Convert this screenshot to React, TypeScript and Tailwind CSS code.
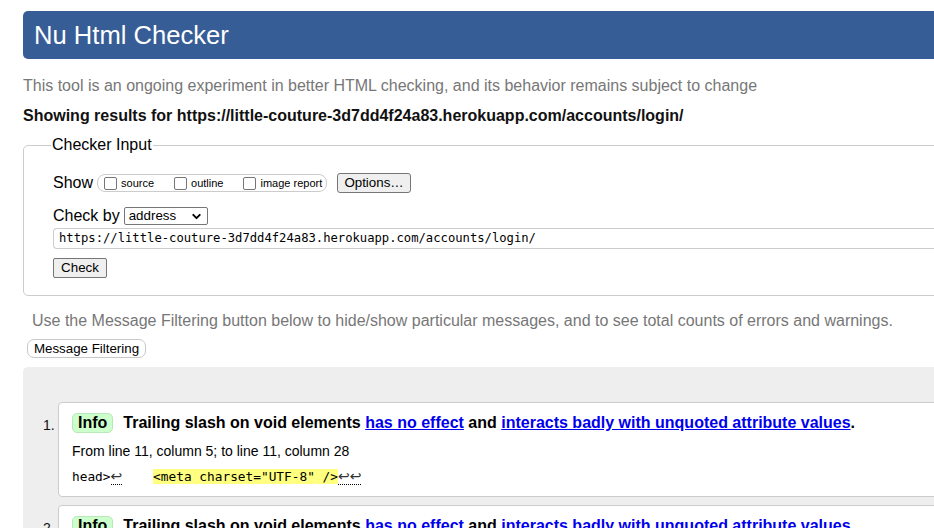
import { ChevronDown } from 'lucide-react'

const url = 'https://little-couture-3d7dd4f24a83.herokuapp.com/accounts/login/'

function Box({ label }: { label: string }) {
  return (
    <label className="flex items-center gap-[4px]">
      <span className="h-[13px] w-[13px] rounded-[2px] border border-[#767676] bg-white" />
      <span className="text-[11px] leading-[14px]">{label}</span>
    </label>
  )
}

function Ret({ n = 1 }: { n?: number }) {
  return (
    <span className="border-b border-dotted border-black font-['DejaVu_Sans',sans-serif] text-[14px] leading-[14px] text-[#333]">
      {'↩'.repeat(n)}
    </span>
  )
}

function Message({ n }: { n: number }) {
  return (
    <div className="flex">
      <span className="mt-[13px] w-[15px] text-[14px] leading-[20px] text-[#111]">{n}.</span>
      <div className="flex-1 rounded-[4px] border border-[#ccc] bg-white pb-[11px] pl-[13px] pt-[10px]">
        <div className="flex h-[20px] items-center gap-[10px] text-[16px] font-bold">
          <span className="rounded-[5px] border border-[#b8e8b8] bg-[#ccffcc] px-[5px] leading-[18px]">Info</span>
          <p className="leading-[20px]">
            Trailing slash on void elements{' '}
            <a className="text-[#0000ee] underline">has no effect</a> and{' '}
            <a className="text-[#0000ee] underline">interacts badly with unquoted attribute values</a>.
          </p>
        </div>
        <p className="mt-[9px] text-[14px] leading-[18px]">From line 11, column 5; to line 11, column 28</p>
        <p className="mt-[8px] whitespace-pre font-['DejaVu_Sans_Mono',monospace] text-[12.8px] leading-[17px]">
          head&gt;<Ret />
          {'    '}
          <span className="bg-[#ffff80]">{'<meta charset="UTF-8" />'}</span>
          <Ret n={2} />
        </p>
      </div>
    </div>
  )
}

export default function App() {
  return (
    <div className="h-[528px] w-[934px] overflow-hidden bg-white font-['Liberation_Sans',Arial,sans-serif] text-black">
      <div className="ml-[23px] w-[1000px] pt-[11px]">
        <h1 className="flex h-[48px] items-center rounded-l-[5px] bg-[#365d95] pl-[11px] text-[25.6px] text-white">
          Nu Html Checker
        </h1>
        <p className="mt-[17px] text-[16px] leading-[20px] text-[#777]">
          This tool is an ongoing experiment in better HTML checking, and its behavior remains subject to change
        </p>
        <p className="mt-[10px] text-[16px] font-bold leading-[20px] text-[#111]">Showing results for {url}</p>

        <fieldset className="mt-[10px] rounded-[5px] border border-[#ccc] px-[29px] pb-[17px] pt-[19px]">
          <legend className="-ml-[2px] px-[1px] text-[16px] leading-[18px]">Checker Input</legend>
          <div className="flex h-[20px] items-center">
            <span className="text-[16px]">Show</span>
            <div className="ml-[4px] flex h-[18px] w-[230px] items-center gap-[20px] rounded-[8px] border border-[#ccc] pl-[6px]">
              <Box label="source" />
              <Box label="outline" />
              <Box label="image report" />
            </div>
            <button className="ml-[10px] h-[20px] w-[74px] rounded-[3px] border border-[#767676] bg-[#efefef] text-[13.33px] leading-[18px]">
              Options…
            </button>
          </div>
          <div className="mt-[13px] flex h-[20px] items-center">
            <span className="text-[16px]">Check by</span>
            <div className="ml-[4px] flex h-[18px] w-[84px] items-center justify-between rounded-[2px] border border-[#767676] pl-[4px] pr-[4px] text-[13.33px]">
              address
              <ChevronDown className="h-[13px] w-[13px]" strokeWidth={3.5} />
            </div>
          </div>
          <div className="mt-[2px] flex h-[21px] items-center rounded-l-[4px] border border-r-0 border-[#ccc] pl-[5px] font-['DejaVu_Sans_Mono',monospace] text-[12.2px]">
            {url}
          </div>
          <button className="mt-[9px] block h-[20px] w-[54px] rounded-[2px] border border-[#767676] bg-[#efefef] text-[13.33px] leading-[18px]">
            Check
          </button>
        </fieldset>

        <p className="mt-[15px] pl-[9px] text-[16px] leading-[20px] text-[#777]">
          Use the Message Filtering button below to hide/show particular messages, and to see total counts of errors and warnings.
        </p>
        <button className="ml-[4px] mt-[8px] block h-[19px] w-[119px] rounded-[7px] border border-[#c8c8c8] bg-white text-[13.33px] leading-[17px]">
          Message Filtering
        </button>

        <div className="mt-[9px] flex flex-col gap-[8px] rounded-tl-[5px] bg-[#eeeeee] pl-[20px] pt-[35px]">
          <Message n={1} />
          <Message n={2} />
        </div>
      </div>
    </div>
  )
}
